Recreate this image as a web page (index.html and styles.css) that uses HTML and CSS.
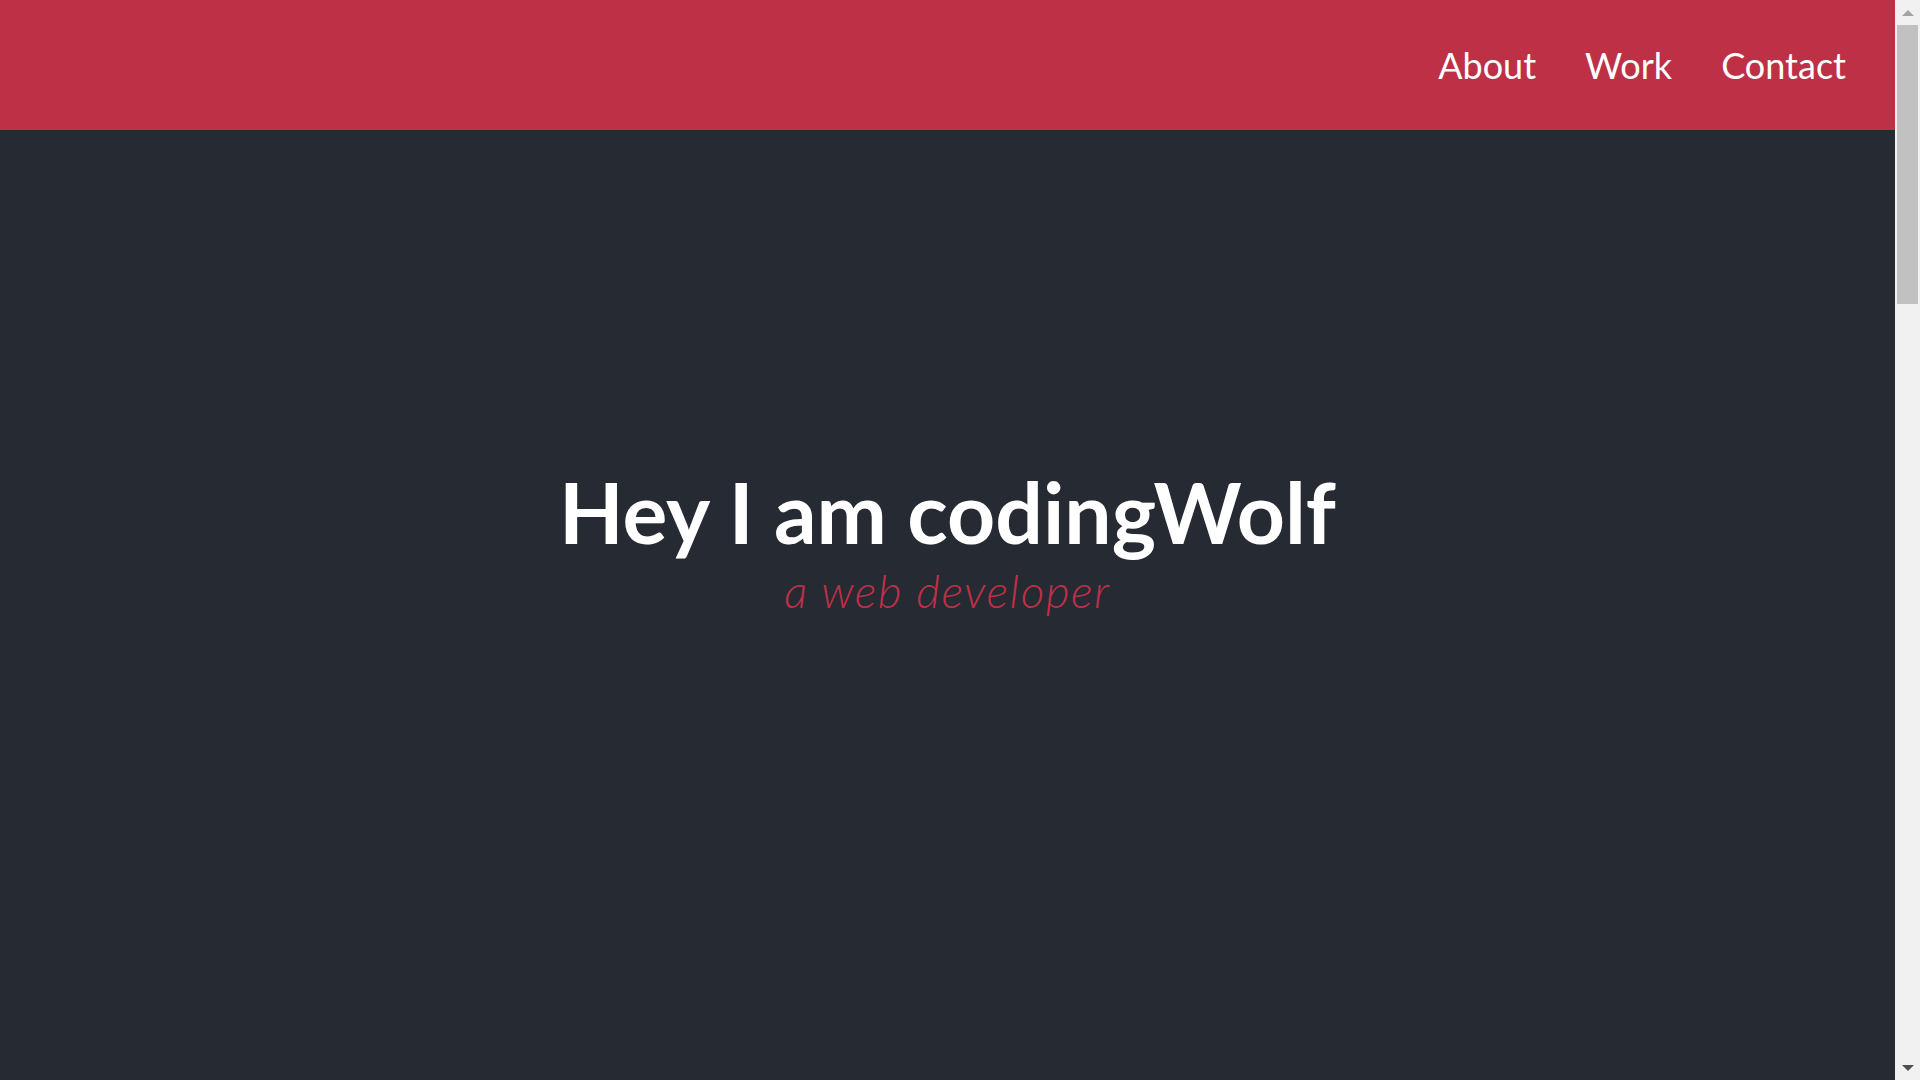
FILE: index.html
```html
<!DOCTYPE html>
<html lang="en">
<head>
<meta charset="utf-8">
<title>codingWolf</title>
<link rel="stylesheet" href="styles.css">
</head>
<body>
<header class="site-header">
  <nav class="nav">
    <a class="nav-link" href="#about">About</a>
    <a class="nav-link" href="#work">Work</a>
    <a class="nav-link" href="#contact">Contact</a>
  </nav>
</header>
<main class="page">
  <section class="hero">
    <h1 class="hero-title">Hey I am codingWolf</h1>
    <p class="hero-sub">a web developer</p>
  </section>
  <section class="section" id="about"></section>
  <section class="section" id="work"></section>
  <section class="section" id="contact"></section>
</main>
<div class="scrollbar" aria-hidden="true">
  <div class="sb-btn"><span class="sb-arrow sb-up"></span></div>
  <div class="sb-track"><div class="sb-thumb"></div></div>
  <div class="sb-btn"><span class="sb-arrow sb-down"></span></div>
</div>
</body>
</html>
```
FILE: styles.css
```css
* { box-sizing: border-box; }
html, body {
  margin: 0;
  padding: 0;
}
body {
  background: #262a32;
  font-family: Lato, "Open Sans", sans-serif;
  color: #ffffff;
  padding-right: 25px;
}
.site-header {
  position: fixed;
  top: 0;
  left: 0;
  right: 25px;
  height: 130px;
  background: #be3046;
  display: flex;
  align-items: center;
  justify-content: flex-end;
  padding-right: 49px;
  z-index: 10;
}
.nav {
  display: flex;
  gap: 49px;
}
.nav-link {
  color: #ffffff;
  text-decoration: none;
  font-size: 36px;
  font-weight: 400;
}
.hero {
  height: 100vh;
  display: flex;
  flex-direction: column;
  align-items: center;
  justify-content: center;
  text-align: center;
}
.hero-title {
  margin: 0;
  font-size: 84px;
  font-weight: 700;
  line-height: 1.2;
}
.hero-sub {
  margin: 0;
  font-size: 46px;
  font-weight: 300;
  font-style: italic;
  letter-spacing: 1.5px;
  color: #be3046;
  line-height: 1.2;
}
.section {
  height: 990px;
}
.scrollbar {
  position: fixed;
  top: 0;
  right: 0;
  width: 25px;
  height: 100vh;
  background: #f1f1f1;
  display: flex;
  flex-direction: column;
  z-index: 20;
}
.sb-btn {
  height: 25px;
  flex: none;
  display: flex;
  align-items: center;
  justify-content: center;
}
.sb-arrow {
  width: 0;
  height: 0;
  border-left: 6px solid transparent;
  border-right: 6px solid transparent;
}
.sb-up {
  border-bottom: 6px solid #a3a3a3;
}
.sb-down {
  border-top: 6px solid #505050;
}
.sb-track {
  flex: 1;
  padding: 0 2px;
}
.sb-thumb {
  height: 279px;
  background: #c1c1c1;
}
```
